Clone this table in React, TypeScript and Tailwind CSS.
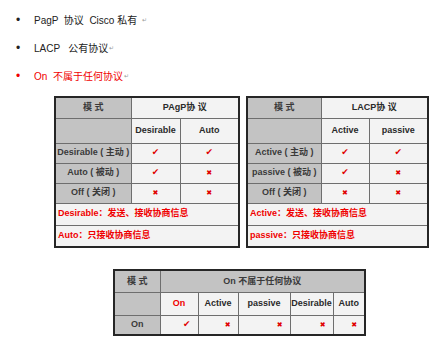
const FONT = "font-['Liberation_Sans','Noto_Sans_CJK_SC',sans-serif]";

const Check = () => <span className="font-['DejaVu_Sans',sans-serif] text-[9px] text-[#e00000]">✔</span>;
const Cross = () => <span className="font-['DejaVu_Sans',sans-serif] text-[7px] text-[#e00000]">✖</span>;

const gray = "bg-[#c3c3c3] border border-[#6e6e6e] text-[#3a3a3a]";
const light = "bg-[#f3f3f3] border border-[#6e6e6e] text-[#2a2a2a]";

function ModeTable({
  proto,
  a,
  b,
  rows,
  notes,
  widths,
}: {
  proto: string;
  a: string;
  b: string;
  rows: { label: string; a: boolean; b: boolean }[];
  notes: string[];
  widths: number[];
}) {
  return (
    <table
      className="table-fixed border-collapse border-2 border-[#262626] text-[9px] font-bold"
      style={{ width: widths.reduce((s, w) => s + w, 0) }}
    >
      <colgroup>
        {widths.map((w, i) => (
          <col key={i} style={{ width: w }} />
        ))}
      </colgroup>
      <tbody>
        <tr className="h-[21px]">
          <td className={`${gray} text-center`}>模 式</td>
          <td colSpan={2} className={`${light} text-center`}>{proto}</td>
        </tr>
        <tr className="h-[25px]">
          <td className={gray}></td>
          <td className={`${light} text-center`}>{a}</td>
          <td className={`${light} text-center`}>{b}</td>
        </tr>
        {rows.map((r) => (
          <tr key={r.label} className="h-[20px]">
            <td className={`${gray} text-center whitespace-nowrap`}>{r.label}</td>
            <td className={`${light} text-center`}>{r.a ? <Check /> : <Cross />}</td>
            <td className={`${light} text-center`}>{r.b ? <Check /> : <Cross />}</td>
          </tr>
        ))}
        {notes.map((n) => (
          <tr key={n} className="h-[22px]">
            <td colSpan={3} className={`${light} pl-[2px] text-[#f00000] whitespace-nowrap`}>
              {n}
            </td>
          </tr>
        ))}
      </tbody>
    </table>
  );
}

export default function App() {
  const onCols = [
    { label: "On", w: 38, red: true, check: true },
    { label: "Active", w: 40 },
    { label: "passive", w: 52 },
    { label: "Desirable", w: 43 },
    { label: "Auto", w: 32 },
  ];

  return (
    <div className={`${FONT} w-[447px] h-[341px] bg-white overflow-hidden`}>
      <ul className="pt-[13px] pl-[16px] text-[10px] text-[#222] flex flex-col gap-[14px]">
        <li className="flex items-center h-[14px]">
          <span className="w-[18px] text-[12px] leading-none">•</span>
          <span className="whitespace-pre">PagP  协议  Cisco 私有</span>
          <span className="ml-[5px] text-[6px] text-[#999]">↵</span>
        </li>
        <li className="flex items-center h-[14px]">
          <span className="w-[18px] text-[12px] leading-none">•</span>
          <span className="whitespace-pre">LACP   公有协议</span>
          <span className="ml-[1px] text-[6px] text-[#999]">↵</span>
        </li>
        <li className="flex items-center h-[14px] text-[#f00000]">
          <span className="w-[18px] text-[12px] leading-none">•</span>
          <span className="whitespace-pre">On  不属于任何协议</span>
          <span className="ml-[1px] text-[6px] text-[#999]">↵</span>
        </li>
      </ul>

      <div className="flex items-start gap-[6px] pl-[54px] mt-[13px]">
        <ModeTable
          proto="PAgP协 议"
          a="Desirable"
          b="Auto"
          widths={[76, 49, 59]}
          rows={[
            { label: "Desirable ( 主动 )", a: true, b: true },
            { label: "Auto ( 被动 )", a: true, b: false },
            { label: "Off ( 关闭 )", a: false, b: false },
          ]}
          notes={["Desirable：发送、接收协商信息", "Auto：只接收协商信息"]}
        />
        <ModeTable
          proto="LACP协 议"
          a="Active"
          b="passive"
          widths={[74, 48, 59]}
          rows={[
            { label: "Active ( 主动 )", a: true, b: true },
            { label: "passive ( 被动 )", a: true, b: false },
            { label: "Off ( 关闭 )", a: false, b: false },
          ]}
          notes={["Active：发送、接收协商信息", "passive：只接收协商信息"]}
        />
      </div>

      <div className="pl-[113px] mt-[21px]">
        <table className="table-fixed border-collapse border-2 border-[#262626] text-[9px] font-bold w-[251px]">
          <colgroup>
            <col style={{ width: 46 }} />
            {onCols.map((c) => (
              <col key={c.label} style={{ width: c.w }} />
            ))}
          </colgroup>
          <tbody>
            <tr className="h-[22px]">
              <td className={`${gray} text-center`}>模 式</td>
              <td colSpan={5} className={`${gray} text-center`}>On 不属于任何协议</td>
            </tr>
            <tr className="h-[23px]">
              <td className={gray}></td>
              {onCols.map((c) => (
                <td key={c.label} className={`${light} text-center whitespace-nowrap ${c.red ? "!text-[#f00000]" : ""}`}>
                  {c.label}
                </td>
              ))}
            </tr>
            <tr className="h-[20px]">
              <td className={`${gray} text-center`}>On</td>
              {onCols.map((c) => (
                <td key={c.label} className={`${light} text-right pr-[7px]`}>
                  {c.check ? <Check /> : <Cross />}
                </td>
              ))}
            </tr>
          </tbody>
        </table>
      </div>
    </div>
  );
}
